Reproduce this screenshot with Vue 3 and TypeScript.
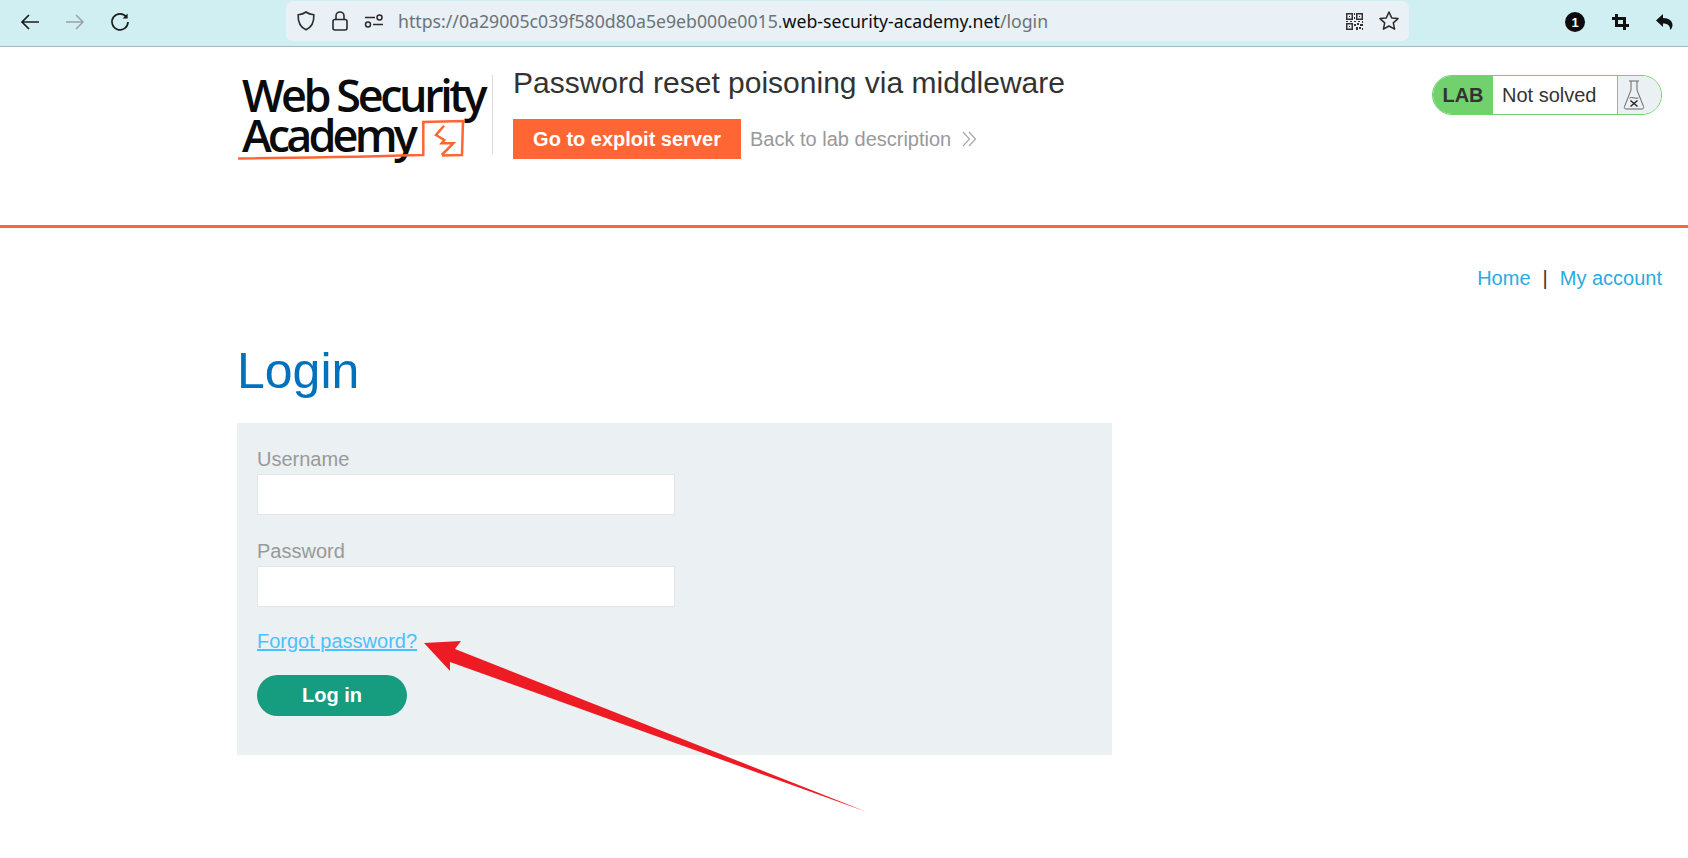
<script setup lang="ts">
// browser chrome + lab login page
const url = {
  scheme: 'https://0a29005c039f580d80a5e9eb000e0015.',
  host: 'web-security-academy.net',
  path: '/login',
}
</script>

<template>
  <div class="page">
    <div class="toolbar">
      <div class="nav-btns">
        <svg width="22" height="22" viewBox="0 0 22 22" fill="none" stroke="#1c1c1c" stroke-width="1.7">
          <path d="M20 11H3M10 4l-7 7 7 7" />
        </svg>
        <svg width="22" height="22" viewBox="0 0 22 22" fill="none" stroke="#9aa3a6" stroke-width="1.5">
          <path d="M2 11h17M12 4l7 7-7 7" />
        </svg>
        <svg width="22" height="22" viewBox="0 0 22 22" fill="none" stroke="#1c1c1c" stroke-width="1.7">
          <path d="M17.5 6.2A8 8 0 1 0 19 11" />
          <path d="M18.6 2.4v5h-5z" fill="#1c1c1c" stroke="none" />
        </svg>
      </div>
      <div class="urlbar">
        <svg class="u-shield" width="20" height="22" viewBox="0 0 20 22" fill="none" stroke="#2b2b2b" stroke-width="1.6">
          <path d="M10 2c2.400 1.800 5 2.500 7.800 2.700.4 7.300-2 12.300-7.800 15.100C4.200 17 1.800 12 2.200 4.700 5 4.500 7.600 3.800 10 2z" />
        </svg>
        <svg class="u-lock" width="18" height="22" viewBox="0 0 18 22" fill="none" stroke="#2b2b2b" stroke-width="1.6">
          <rect x="2" y="9.500" width="14" height="10.500" rx="2" />
          <path d="M5 9.500V6a4 4 0 0 1 8 0v3.500" />
        </svg>
        <svg class="u-tune" width="20" height="14" viewBox="0 0 20 14" fill="none" stroke="#2b2b2b" stroke-width="1.5">
          <path d="M1 3.500h10M9 10.500h10" />
          <circle cx="15.500" cy="3.500" r="2.500" />
          <circle cx="4" cy="10.500" r="2.500" />
        </svg>
        <span class="url"><span class="dim">{{ url.scheme }}</span><span class="host">{{ url.host }}</span><span class="dim">{{ url.path }}</span></span>
        <svg class="u-qr" width="19" height="19" viewBox="0 0 19 19" fill="#333">
          <path d="M1 1h7v7H1zM2.500 2.500v4h4v-4zM11 1h7v7h-7zM12.500 2.500v4h4v-4zM1 11h7v7H1zM2.500 12.500v4h4v-4z" fill-rule="evenodd" />
          <path d="M4 4h1v1H4zM14 4h1v1h-1zM4 14h1v1H4zM9 1h1v2H9zM9 5h1v2H9zM1 9h2v1H1zM5 9h2v1H5zM9 9h2v1H9zM13 9h2v1h-2zM17 9h1v2h-1zM9 12h2v2H9zM12 11h2v2h-2zM15 12h3v2h-3zM11 15h2v3h-2zM14 15h2v2h-2zM17 16h1v2h-1z" />
        </svg>
        <svg class="u-star" width="22" height="22" viewBox="0 0 22 22" fill="none" stroke="#2b2b2b" stroke-width="1.5" stroke-linejoin="round">
          <path d="M11 2l2.700 5.900 6.300.7-4.700 4.300 1.300 6.300L11 16l-5.600 3.200 1.300-6.300L2 8.600l6.300-.7z" />
        </svg>
      </div>
      <div class="ext-btns">
        <span class="badge">1</span>
        <svg width="17" height="16" viewBox="0 0 17 16" fill="none" stroke="#111" stroke-width="3">
          <path d="M4.500 0v11.500H17M0 4.500h12.500V16" />
        </svg>
        <svg width="17" height="16" viewBox="0 0 17 16" fill="#111">
          <path d="M0 6.500L7 0v4c6 0 9.500 3 9.500 7 0 2-1 4-2.500 5 .5-4-2-6.500-7-6.500V13z" />
        </svg>
      </div>
    </div>

    <header class="lab-header">
      <div class="logo">
        <div class="logo-text">
          <span class="logo-web">Web Security</span>
          <span class="logo-acad">Academy</span>
        </div>
        <svg class="logo-mark" width="250" height="50" viewBox="0 0 250 50" fill="none" stroke="#ff6633" stroke-width="2.500">
          <path d="M0 42.500C60 42 130 40.500 185.300 39V6L225 5l-1 34-20 .6" />
          <path d="M206 9.700L198 19l8.300 5-2.600 3.300h11.600L203.700 39" />
        </svg>
      </div>
      <div class="lab-title">
        <h2>Password reset poisoning via middleware</h2>
        <div class="lab-actions">
          <a class="exploit-btn">Go to exploit server</a>
          <a class="back-link">Back to lab description</a>
          <svg width="15" height="16" viewBox="0 0 15 16" fill="none" stroke="#a8a8a8" stroke-width="1.200">
            <path d="M1 1l6.500 7L1 15M7 1l6.500 7L7 15" />
          </svg>
        </div>
      </div>
      <div class="status">
        <span class="status-lab">LAB</span>
        <span class="status-text">Not solved</span>
        <span class="status-icon">
          <svg width="22" height="32" viewBox="0 0 22 32" fill="none" stroke="#666" stroke-width="1">
            <path d="M6 2h10M8 2v9L1.500 27.500c-.6 1.500.3 2.500 1.500 2.500h16c1.200 0 2.100-1 1.500-2.500L14 11V2" />
            <path d="M6.500 19c3-1.500 5 1 9 0" />
            <path d="M7.500 21.500l7 6M14.500 21.500l-7 6" stroke="#222" stroke-width="1.400" />
          </svg>
        </span>
      </div>
    </header>

    <main class="content">
      <nav class="top-links">
        <a>Home</a>
        <span class="sep">|</span>
        <a>My account</a>
      </nav>
      <h1>Login</h1>
      <form class="login-form" @submit.prevent>
        <label>Username</label>
        <input type="text" />
        <label>Password</label>
        <input type="password" />
        <a class="forgot">Forgot password?</a>
        <button type="submit">Log in</button>
      </form>
    </main>

    <!-- annotation drawn over the screenshot -->
    <svg class="arrow" width="1688" height="858" viewBox="0 0 1688 858">
      <path d="M424 643L461 641 455 649 867 812 450 662 450 671z" fill="#ed1c24" />
    </svg>
  </div>
</template>

<style scoped>
.page {
  position: relative;
  width: 1688px;
  height: 858px;
  overflow: hidden;
  background: #fff;
  font-family: "Liberation Sans", Arial, sans-serif;
  color: #333332;
}

.toolbar {
  display: flex;
  align-items: center;
  height: 46px;
  background: #cfeff3;
  border-bottom: 1px solid #a4b7ba;
}

.nav-btns {
  display: flex;
  gap: 23px;
  width: 286px;
  padding-left: 19px;
  box-sizing: border-box;
  margin-top: -2px;
}

.urlbar {
  display: flex;
  align-items: center;
  width: 1123px;
  height: 40px;
  margin-top: -4px;
  border-radius: 7px;
  background: #e9f0f6;
}
.u-shield { margin-left: 10px; }
.u-lock { margin-left: 15px; }
.u-tune { margin-left: 15px; }
.url {
  margin-left: 14px;
  font-size: 17.7px;
  font-family: "Noto Sans", sans-serif;
  white-space: nowrap;
}
.url .dim { color: #6b7479; }
.url .host { color: #0c0e0f; }
.u-qr { margin-left: auto; }
.u-star { margin-left: 14px; margin-right: 9px; }

.ext-btns {
  display: flex;
  align-items: center;
  gap: 27px;
  margin-left: 156px;
  margin-top: -2px;
}
.badge {
  display: flex;
  align-items: center;
  justify-content: center;
  width: 20px;
  height: 20px;
  border-radius: 50%;
  background: #0c0c0c;
  color: #fff;
  font-size: 13px;
  font-weight: 700;
}

.lab-header {
  display: flex;
  height: 181px;
  box-sizing: border-box;
  padding: 28px 26px 0 237px;
  border-bottom: 3px solid #ff6633;
}

.logo {
  position: relative;
  width: 255px;
  height: 79px;
  border-right: 1px solid #d9d9d9;
  margin-right: 20px;
}
.logo-text {
  display: flex;
  flex-direction: column;
  padding-left: 5px;
  font-family: "Open Sans", sans-serif;
  font-size: 45px;
  font-weight: 600;
  line-height: 40px;
  color: #0b0b0b;
  white-space: nowrap;
}
.logo-web { letter-spacing: -3.45px; }
.logo-acad { letter-spacing: -3.9px; }
.logo-mark {
  position: absolute;
  left: 1px;
  top: 41px;
}

.lab-title h2 {
  margin: -10px 0 0;
  font-size: 30px;
  font-weight: 400;
  line-height: 36px;
  white-space: nowrap;
}
.lab-actions {
  display: flex;
  align-items: center;
  margin-top: 18px;
}
.exploit-btn {
  display: flex;
  align-items: center;
  justify-content: center;
  width: 228px;
  height: 40px;
  background: #ff6633;
  color: #fff;
  font-size: 20px;
  font-weight: 700;
}
.back-link {
  margin-left: 9px;
  margin-right: 11px;
  color: #999;
  font-size: 20px;
}

.status {
  display: flex;
  align-items: stretch;
  width: 230px;
  height: 40px;
  box-sizing: border-box;
  margin-left: auto;
  border: 1px solid #70d16d;
  border-radius: 20px;
  overflow: hidden;
}
.status-lab {
  display: flex;
  align-items: center;
  justify-content: center;
  width: 60px;
  background: #70d16d;
  font-size: 20px;
  font-weight: 700;
}
.status-text {
  display: flex;
  align-items: center;
  width: 124px;
  box-sizing: border-box;
  padding-left: 9px;
  font-size: 20px;
}
.status-icon {
  flex: 1;
  display: flex;
  align-items: center;
  padding-left: 5px;
  background: #ebf0f2;
  border-left: 1px solid #70d16d;
}

.content {
  padding: 0 26px 0 237px;
}

.top-links {
  display: flex;
  justify-content: flex-end;
  align-items: center;
  gap: 12px;
  margin-top: 38px;
  height: 24px;
  font-size: 20px;
  color: #29abe2;
}
.top-links .sep { color: #333332; }

h1 {
  margin: 51px 0 0;
  font-size: 50px;
  font-weight: 400;
  line-height: 60px;
  color: #0071bc;
}

.login-form {
  display: flex;
  flex-direction: column;
  align-items: flex-start;
  width: 875px;
  height: 332px;
  box-sizing: border-box;
  margin-top: 22px;
  padding: 24px 20px;
  background: #ebf0f2;
}
.login-form label {
  height: 27px;
  font-size: 20px;
  line-height: 24px;
  color: #999;
}
.login-form input {
  width: 418px;
  height: 41px;
  box-sizing: border-box;
  margin-bottom: 24px;
  border: 1px solid #e2e6e8;
  background: #fff;
}
.forgot {
  margin-top: -2px;
  font-size: 20px;
  line-height: 24px;
  color: #4cc1ff;
  text-decoration: underline;
}
.login-form button {
  width: 150px;
  height: 41px;
  margin-top: 22px;
  border: 0;
  border-radius: 21px;
  background: #169c7f;
  color: #fff;
  font: 700 20px "Liberation Sans", Arial, sans-serif;
}

.arrow {
  position: absolute;
  left: 0;
  top: 0;
  pointer-events: none;
}
</style>
